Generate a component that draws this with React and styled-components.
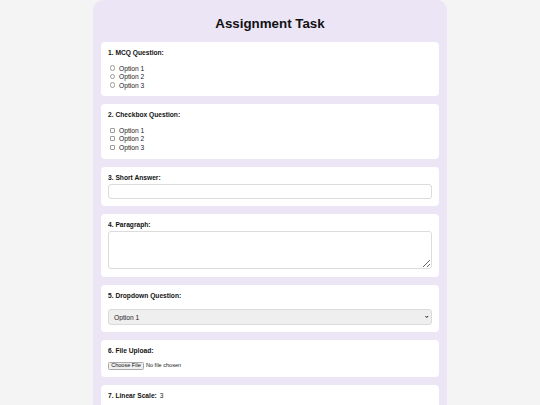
import React from "react";
import styled, { createGlobalStyle } from "styled-components";

const Global = createGlobalStyle`
  html, body { margin: 0; padding: 0; background: #f4f4f4; }
  body { font-family: "Liberation Sans", Arial, Helvetica, sans-serif; color: #222; font-size: 6.67px; }
  * { box-sizing: border-box; }
`;

const Container = styled.div`
  width: 354px;
  margin: 0 auto;
  background: #ebe5f5;
  border-radius: 10px;
  padding: 16.3px 8px 8px;
  display: flex;
  flex-direction: column;
`;

const Title = styled.h1`
  margin: 0 0 10.4px;
  font-size: 13.33px;
  line-height: 15.33px;
  font-weight: bold;
  text-align: center;
  color: #111;
`;

const Cards = styled.div`
  display: flex;
  flex-direction: column;
  gap: 8px;
`;

const Card = styled.div`
  background: #fff;
  border-radius: 4px;
  padding: 7px 7px ${(p) => p.$pb || 7}px;
  display: flex;
  flex-direction: column;
`;

const Label = styled.div`
  font-weight: bold;
  font-size: 6.67px;
  line-height: 7.67px;
  color: #111;
  margin-bottom: ${(p) => p.$mb || 0}px;
`;

const Value = styled.span`
  font-weight: normal;
  margin-left: 3px;
  color: #222;
`;

const Options = styled.div`
  display: flex;
  flex-direction: column;
`;

const Option = styled.label`
  display: flex;
  align-items: center;
  height: 8.5px;
  font-size: 6.67px;
  color: #222;
`;

const Choice = styled.input`
  appearance: none;
  width: 5.4px;
  height: 5.4px;
  margin: 0 3.6px 0 2.1px;
  flex: none;
  border: 0.8px solid #9a9a9a;
  background: #fff;
  border-radius: ${(p) => (p.type === "radio" ? "50%" : "1px")};
`;

const TextInput = styled.input`
  display: block;
  width: 100%;
  height: 15px;
  margin-top: 2.4px;
  border: 1px solid #dcdcdc;
  border-radius: 3px;
  background: #fff;
  font-size: 6.67px;
  padding: 0 4px;
`;

const TextArea = styled.textarea`
  display: block;
  width: 100%;
  height: 38px;
  margin-top: 2.33px;
  border: 1px solid #dcdcdc;
  border-radius: 3px;
  font-size: 6.67px;
  font-family: inherit;
  padding: 3px 4px;
  resize: vertical;
`;

const SelectWrap = styled.div`
  position: relative;
  margin-top: 10px;
`;

const Select = styled.select`
  appearance: none;
  display: block;
  width: 100%;
  height: 16px;
  border: 1px solid #dadada;
  border-radius: 3px;
  background-color: #efefef;
  color: #222;
  font-family: inherit;
  font-size: 6.67px;
  padding: 0 5px;
`;

const Chevron = styled.svg`
  position: absolute;
  right: 3.5px;
  top: 6px;
  width: 3.6px;
  height: 3.6px;
  pointer-events: none;
`;

const File = styled.input`
  display: block;
  margin-top: 7.67px;
  height: 7.67px;
  font-family: inherit;
  font-size: 5.56px;
  line-height: 7.67px;
  color: #222;
  &::file-selector-button {
    font-family: inherit;
    font-size: 5.56px;
    height: 7.67px;
    line-height: 5.5px;
    padding: 0 2.2px;
    margin: 0 2px 0 0;
    border: 1px solid #a8a8a8;
    border-radius: 1.5px;
    background: #efefef;
    color: #111;
    vertical-align: top;
  }
`;

const Range = styled.input`
  display: block;
  width: 100%;
  height: 8px;
  margin: 12px 0 0;
`;

const SubmitRow = styled.div`
  display: flex;
  justify-content: center;
  padding: 4px 0;
`;

const Submit = styled.button`
  font-family: inherit;
  font-size: 6.67px;
  padding: 4px 10px;
  border: none;
  border-radius: 3px;
  background: #6a4fb3;
  color: #fff;
`;

function ChoiceGroup({ type, name }) {
  return (
    <Options>
      {["Option 1", "Option 2", "Option 3"].map((o) => (
        <Option key={o}>
          <Choice type={type} name={name} />
          {o}
        </Option>
      ))}
    </Options>
  );
}

export default function App() {
  return (
    <>
      <Global />
      <Container>
        <Title>Assignment Task</Title>
        <Cards>
          <Card>
            <Label $mb={7.08}>1. MCQ Question:</Label>
            <ChoiceGroup type="radio" name="mcq" />
          </Card>
          <Card>
            <Label $mb={7.08}>2. Checkbox Question:</Label>
            <ChoiceGroup type="checkbox" name="cb" />
          </Card>
          <Card>
            <Label>3. Short Answer:</Label>
            <TextInput type="text" />
          </Card>
          <Card $pb={8}>
            <Label>4. Paragraph:</Label>
            <TextArea />
          </Card>
          <Card $pb={6.33}>
            <Label>5. Dropdown Question:</Label>
            <SelectWrap>
              <Select defaultValue="Option 1">
                <option>Option 1</option>
                <option>Option 2</option>
                <option>Option 3</option>
              </Select>
              <Chevron viewBox="0 0 8 8">
                <path d="M1 2.2 L4 5.6 L7 2.2" fill="none" stroke="#222" strokeWidth="2.2" />
              </Chevron>
            </SelectWrap>
          </Card>
          <Card>
            <Label>6. File Upload:</Label>
            <File type="file" />
          </Card>
          <Card>
            <Label>
              7. Linear Scale:<Value>3</Value>
            </Label>
            <Range type="range" min="1" max="5" defaultValue="3" />
          </Card>
          <SubmitRow>
            <Submit>Submit</Submit>
          </SubmitRow>
        </Cards>
      </Container>
    </>
  );
}
